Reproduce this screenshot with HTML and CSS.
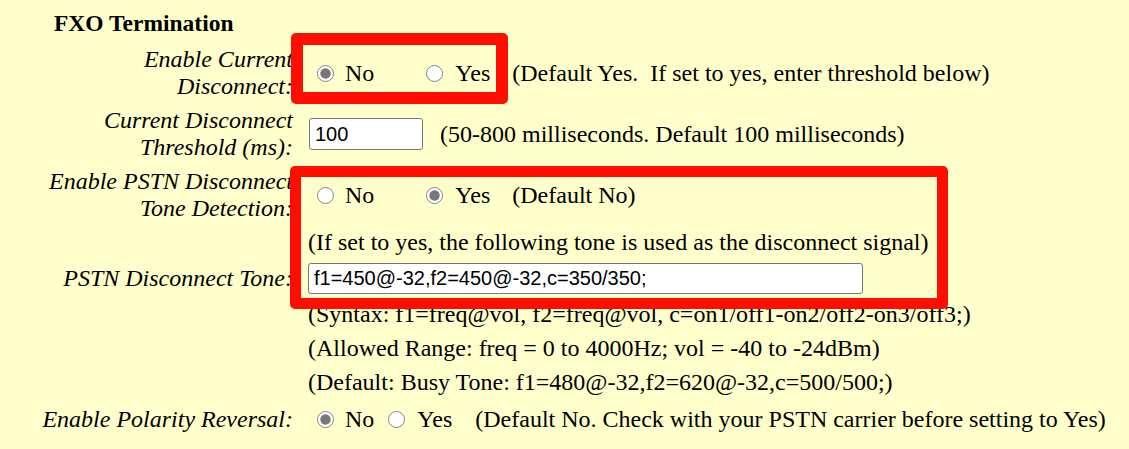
FILE: index.html
```html
<!DOCTYPE html>
<html>
<head>
<meta charset="utf-8">
<title>FXO Termination</title>
<link rel="stylesheet" href="styles.css">
</head>
<body>
<div class="page">
  <h3 class="section-title">FXO Termination</h3>
  <div class="form">
    <div class="label">Enable Current<br>Disconnect:</div>
    <div class="value">
      <input class="radio first" type="radio" name="cd" checked><span class="opt">No</span>
      <input class="radio wide" type="radio" name="cd"><span class="opt">Yes</span>
      <span class="note">(Default Yes.&nbsp; If set to yes, enter threshold below)</span>
    </div>

    <div class="label">Current Disconnect<br>Threshold (ms):</div>
    <div class="value">
      <input class="text short" type="text" value="100">
      <span class="note-input">(50-800 milliseconds. Default 100 milliseconds)</span>
    </div>

    <div class="label">Enable PSTN Disconnect<br>Tone Detection:</div>
    <div class="value">
      <input class="radio first" type="radio" name="pd"><span class="opt">No</span>
      <input class="radio wide" type="radio" name="pd" checked><span class="opt">Yes</span>
      <span class="note">(Default No)</span>
    </div>

    <div class="label"></div>
    <div class="value">(If set to yes, the following tone is used as the disconnect signal)</div>

    <div class="label">PSTN Disconnect Tone:</div>
    <div class="value">
      <input class="text long" type="text" value="f1=450@-32,f2=450@-32,c=350/350;">
    </div>

    <div class="label"></div>
    <div class="value">(Syntax: f1=freq@vol, f2=freq@vol, c=on1/off1-on2/off2-on3/off3;)</div>

    <div class="label"></div>
    <div class="value">(Allowed Range: freq = 0 to 4000Hz; vol = -40 to -24dBm)</div>

    <div class="label"></div>
    <div class="value">(Default: Busy Tone: f1=480@-32,f2=620@-32,c=500/500;)</div>

    <div class="label spaced">Enable Polarity Reversal:</div>
    <div class="value spaced">
      <input class="radio first" type="radio" name="pr" checked><span class="opt">No</span>
      <input class="radio tight" type="radio" name="pr"><span class="opt">Yes</span>
      <span class="note-tight">(Default No. Check with your PSTN carrier before setting to Yes)</span>
    </div>
  </div>

  <div class="callout callout-radios"></div>
  <div class="callout callout-tone"></div>
</div>
</body>
</html>
```

FILE: styles.css
```css
html {
  background: #ffffcc;
}

body {
  margin: 8px;
  font-family: "Liberation Serif", "Times New Roman", serif;
  font-size: 24px;
  color: #000;
  background: #ffffcc;
}

.page {
  position: relative;
}

.section-title {
  margin: 0;
  padding: 2px 0 0 46px;
  font-size: 23.5px;
  font-weight: bold;
  line-height: 27px;
}

.form {
  display: grid;
  grid-template-columns: 285px 1fr;
  column-gap: 15px;
  row-gap: 7px;
  align-items: center;
  margin-top: 9px;
}

.label {
  font-style: italic;
  text-align: right;
  white-space: nowrap;
  line-height: 27px;
}

.value {
  display: flex;
  align-items: center;
  white-space: nowrap;
  line-height: 27px;
}

.spaced {
  margin-top: 3px;
}

.radio {
  appearance: none;
  -webkit-appearance: none;
  box-sizing: border-box;
  width: 17px;
  height: 17px;
  margin: 0 12px 0 0;
  border: 1.5px solid #858585;
  border-radius: 50%;
  background: #fff;
  flex: none;
}

.radio:checked {
  background: radial-gradient(circle, #777777 0 4.8px, #ffffff 5.5px);
}

.radio.first {
  margin-left: 9px;
  margin-right: 11px;
}

.radio.wide {
  margin-left: 52px;
}

.radio.tight {
  margin-left: 14px;
}

.opt {
  display: inline-block;
}

.note {
  margin-left: 22px;
}

.note-tight {
  margin-left: 23px;
}

.note-input {
  margin-left: 17px;
}

.text {
  box-sizing: border-box;
  margin: 0;
  padding: 0 5px;
  border: 1px solid #767676;
  border-radius: 3px;
  background: #fff;
  font-family: "Liberation Sans", Arial, sans-serif;
  font-size: 20px;
  color: #000;
}

.text.short {
  width: 114px;
  height: 32px;
  margin-left: 1px;
}

.text.long {
  width: 555px;
  height: 31px;
}

.callout {
  position: absolute;
  box-sizing: border-box;
  border: 12px solid #ff0d00;
  border-radius: 5px;
  pointer-events: none;
}

.callout-radios {
  left: 283px;
  top: 25px;
  width: 217px;
  height: 71px;
}

.callout-tone {
  left: 282px;
  top: 158px;
  width: 658px;
  height: 143px;
  border-width: 11px;
}
```
